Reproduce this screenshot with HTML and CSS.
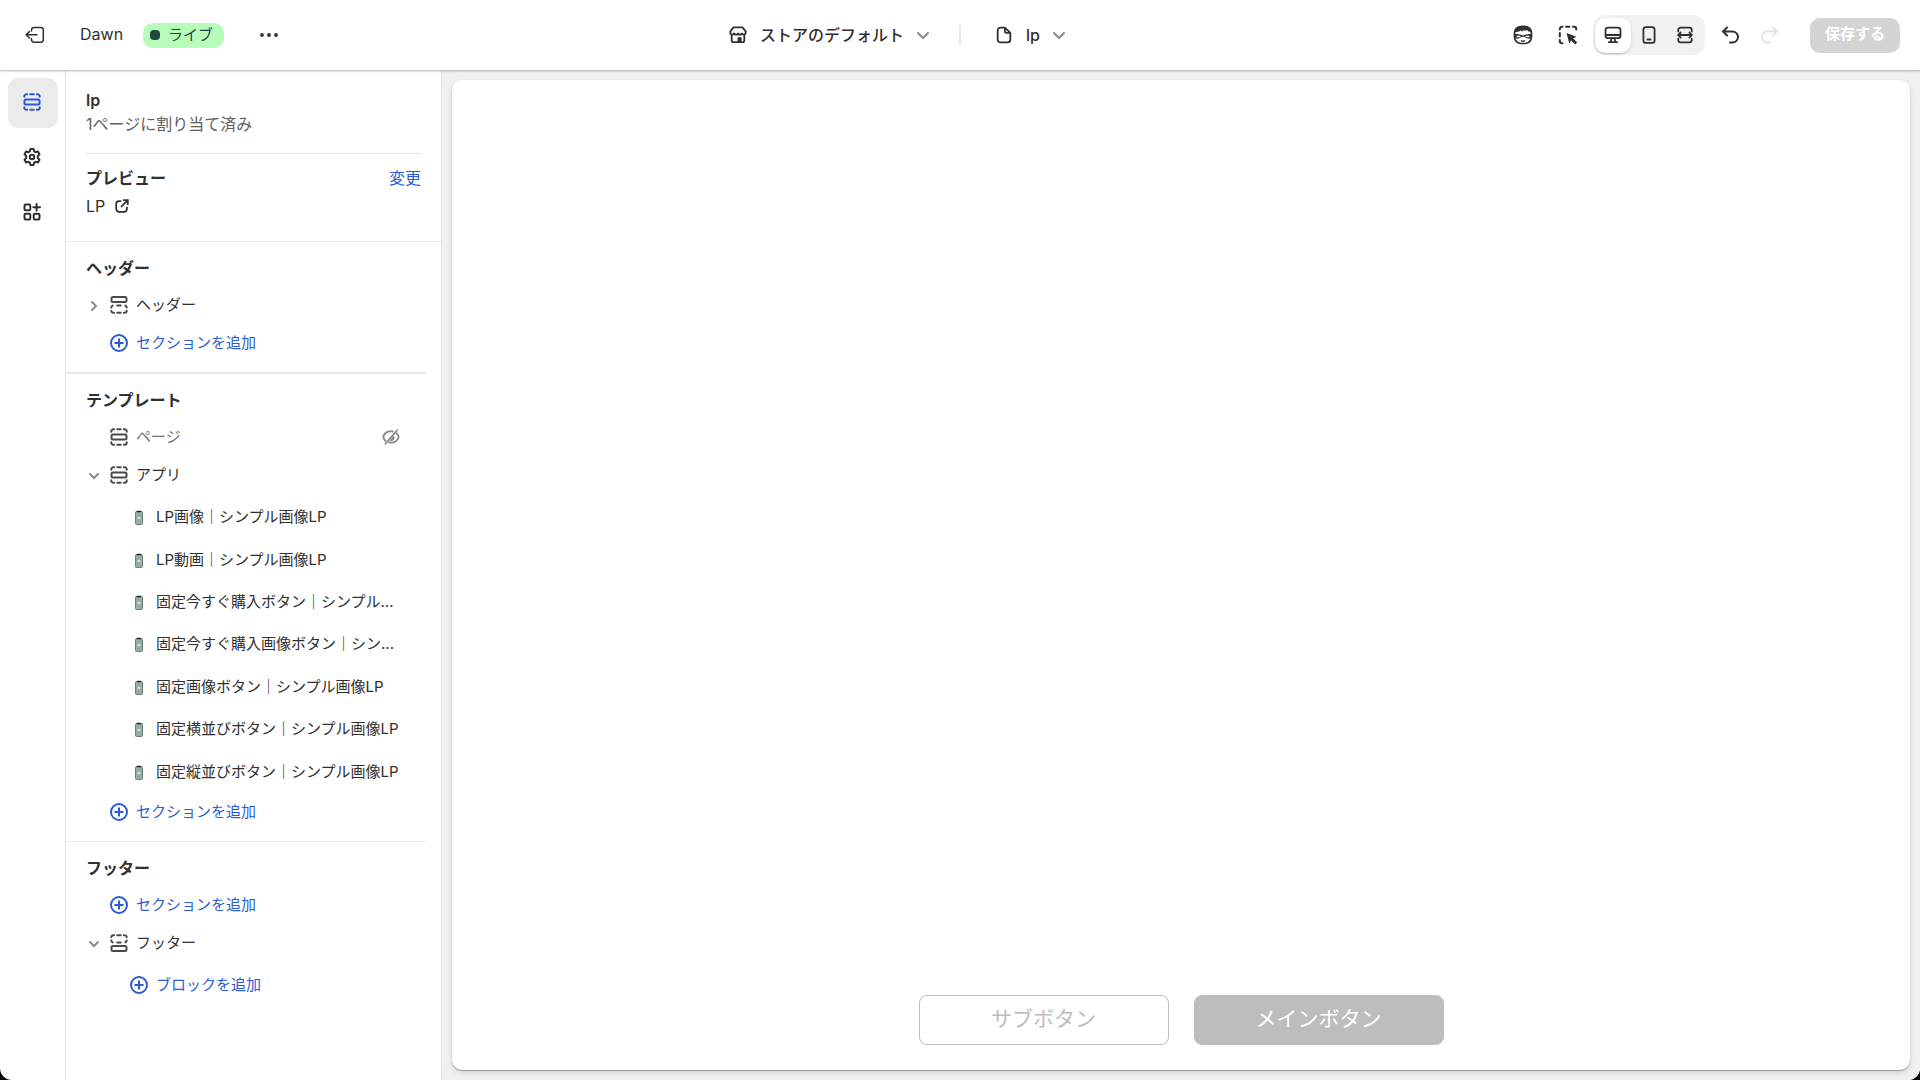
FILE: index.html
```html
<!DOCTYPE html>
<html lang="ja">
<head>
    <meta charset="UTF-8">
    <meta name="viewport" content="width=device-width, initial-scale=1.0">
    <title>Dawn - lp</title>
    <link rel="stylesheet" href="styles.css">
</head>
<body>
    <!-- shared icons -->
    <svg class="sprite" aria-hidden="true">
        <symbol id="i-section" viewBox="0 0 18 18">
            <rect x="1.5" y="6.5" width="15" height="5" rx="1.5"/>
            <path d="M1.3 3.8v-.5a2 2 0 0 1 2-2h.9M7.3 1.3h3.4M13.8 1.3h.9a2 2 0 0 1 2 2v.5M1.3 14.2v.5a2 2 0 0 0 2 2h.9M7.3 16.7h3.4M13.8 16.7h.9a2 2 0 0 0 2-2v-.5"/>
        </symbol>
        <symbol id="i-header" viewBox="0 0 18 18">
            <rect x="1.5" y="1" width="15" height="5" rx="1.5"/>
            <path d="M1.3 11.5c0-.9.5-1.6 1.4-1.9M7.3 9.6h3.4M15.3 9.6c.9.3 1.4 1 1.4 1.9M1.3 14.7a2 2 0 0 0 2 2h.9M7.3 16.7h3.4M13.8 16.7h.9a2 2 0 0 0 2-2"/>
        </symbol>
        <symbol id="i-footer" viewBox="0 0 18 18">
            <rect x="1.5" y="12" width="15" height="5" rx="1.5"/>
            <path d="M1.3 3.3a2 2 0 0 1 2-2h.9M7.3 1.3h3.4M13.8 1.3h.9a2 2 0 0 1 2 2M1.3 6.5c0 .9.5 1.6 1.4 1.9M7.3 8.4h3.4M15.3 8.400c.9-.3 1.400-1 1.400-1.900"/>
        </symbol>
        <symbol id="i-plus" viewBox="0 0 18 18">
            <circle cx="9" cy="9" r="8"/>
            <path d="M9 5.2v7.6M5.2 9h7.6"/>
        </symbol>
        <symbol id="i-down" viewBox="0 0 18 18">
            <path d="M4 7l5 5 5-5"/>
        </symbol>
        <symbol id="i-toggle-down" viewBox="0 0 18 18">
            <path d="M6 8l4 4 4-4"/>
        </symbol>
        <symbol id="i-toggle-right" viewBox="0 0 18 18">
            <path d="M8 6l4 4-4 4"/>
        </symbol>
        <symbol id="i-block" viewBox="0 0 18 18">
            <rect x="5.5" y="3.5" width="7" height="13" rx="1" fill="#8fb0a0" stroke="#777" stroke-width="1"/>
            <path d="M7.5 3.5h3" stroke="#222" stroke-width="1.5"/>
            <path d="M8 10h2" stroke="#e4f2ea" stroke-width="1.5"/>
        </symbol>
    </svg>

    <div class="app">
        <header class="topbar">
            <div class="topbar-half">
                <div class="theme">
                    <button class="icon-btn" aria-label="戻る">
                        <svg class="icon thin" viewBox="0 0 20 18"><path d="M6.5 5V4a2.6 2.6 0 0 1 2.6-2.6h6.6A2.6 2.6 0 0 1 18.3 4v9.6a2.6 2.6 0 0 1-2.6 2.6H9.1a2.6 2.6 0 0 1-2.6-2.6v-1M12 8.8H1.2M4.4 5.6L1.2 8.8l3.2 3.2"/></svg>
                    </button>
                    <span class="theme-name">Dawn</span>
                    <span class="badge">ライブ</span>
                    <button class="icon-btn" aria-label="その他">
                        <svg class="icon fill" viewBox="0 0 20 18"><circle cx="3" cy="9" r="1.9"/><circle cx="10" cy="9" r="1.9"/><circle cx="17" cy="9" r="1.9"/></svg>
                    </button>
                </div>
                <button class="picker picker-store">
                    <svg class="icon" viewBox="0 0 20 20"><path d="M5 1.5h10L18.5 6v1.500a2 2 0 0 1-4.200 0 2 2 0 0 1-4.300 0 2 2 0 0 1-4.300 0 2 2 0 0 1-4.200 0V6zM3 10v6a2 2 0 0 0 2 2h10a2 2 0 0 0 2-2v-6"/><path d="M10.5 18v-4.5H13V18z" fill="currentColor"/></svg>
                    ストアのデフォルト
                    <svg class="icon chev"><use href="#i-down"/></svg>
                </button>
            </div>
            <span class="topbar-line"></span>
            <div class="topbar-half">
                <button class="picker picker-page">
                    <svg class="icon" viewBox="0 0 20 20"><path d="M11 1.7H6a3 3 0 0 0-3 3v10.6a3 3 0 0 0 3 3h8a3 3 0 0 0 3-3V7.7zM11 1.7v4.5a1.500 1.500 0 0 0 1.500 1.500H17"/></svg>
                    lp
                    <svg class="icon chev"><use href="#i-down"/></svg>
                </button>
                <div class="tools">
                    <button class="icon-btn" aria-label="Sidekick">
                        <!-- masked face: head, hair, mask, eyes, smile -->
                        <svg class="icon" viewBox="0 0 20 20">
                            <rect x="1.5" y="1.5" width="17" height="17" rx="6.5" stroke-width="1.7"/>
                            <path class="solid" d="M1.5 7C2 3 5 .8 10 .8S18 3 18.500 7c-2.500 0-4-.8-4.500-2-1.500.9-3 .7-4 .2-.4.8-1.200 1.200-2 1.200V5.200C6 7 4 7 1.500 7z"/>
                            <path class="solid" d="M1 8.500l6 1c1.200.2 1.800.8 3 .8s1.800-.6 3-.8l6-1V12c-1.300 2-5 2.200-6.500.5-.8-.9-4.200-.9-5 0C6 14.200 2.300 14 1 12z"/>
                            <path d="M4.200 11.500h2.600M13.200 11.500h2.600" stroke="#fff" stroke-width="1.500"/>
                            <path d="M8.300 15.800c1 .6 2.400.6 3.400 0" stroke-width="1.300"/>
                        </svg>
                    </button>
                    <button class="icon-btn" aria-label="インスペクター">
                        <svg class="icon" viewBox="0 0 20 20"><path d="M1.8 4.5V4A2.200 2.200 0 0 1 4 1.8h.5M8 1.8h3.500M15 1.8h1A2.200 2.200 0 0 1 18.200 4v.5M1.8 8v3.500M1.8 15v1A2.200 2.200 0 0 0 4 18.200h.5"/><path class="solid" d="M8.500 8l10 3.700-3.500 1.600 4.200 4.200-2 2-4.200-4.200-1.600 3.500z"/></svg>
                    </button>
                    <div class="devices">
                        <button class="device active" aria-label="デスクトップ">
                            <svg class="icon" viewBox="0 0 20 20"><rect x="1.7" y="1.9" width="16.6" height="11.6" rx="2.8"/><path d="M2 10h16M8.300 13.500L7.500 18M11.700 13.500l.8 4.500M5.500 18h9"/></svg>
                        </button>
                        <button class="device" aria-label="モバイル">
                            <svg class="icon" viewBox="0 0 20 20"><rect x="3.8" y="1.2" width="12.4" height="17.6" rx="2.8"/><path d="M8.300 15h3.400"/></svg>
                        </button>
                        <button class="device" aria-label="全画面">
                            <svg class="icon" viewBox="0 0 20 20"><path d="M2.500 6V4.500a2.700 2.700 0 0 1 2.700-2.700h9.600a2.700 2.700 0 0 1 2.700 2.700V6M2.500 14v1.500a2.700 2.700 0 0 0 2.700 2.700h9.600a2.700 2.700 0 0 0 2.700-2.700V14M2.500 10h15M5.200 7.200L2.400 10l2.800 2.800M14.800 7.200l2.800 2.800-2.800 2.800"/></svg>
                        </button>
                    </div>
                    <button class="icon-btn" aria-label="元に戻す">
                        <svg class="icon" viewBox="0 0 20 20"><path d="M7 2.500l-4 4 4 4M3 6.500h9.500a5 5 0 0 1 0 11H10"/></svg>
                    </button>
                    <button class="icon-btn" aria-label="やり直す" disabled>
                        <svg class="icon" viewBox="0 0 20 20"><path d="M13 2.500l4 4-4 4M17 6.500H7.500a5 5 0 0 0 0 11H10"/></svg>
                    </button>
                    <button class="save" disabled>保存する</button>
                </div>
            </div>
        </header>

        <div class="main">
            <nav class="rail">
                <button class="rail-btn active" aria-label="セクション"><svg class="icon"><use href="#i-section"/></svg></button>
                <button class="rail-btn" aria-label="テーマ設定">
                    <svg class="icon" viewBox="0 0 18 18"><path d="M7.400 1h3.200l.5 2.300 1.500.9 2.300-.7 1.600 2.800-1.700 1.600v2.200l1.700 1.600-1.600 2.800-2.300-.7-1.500.9-.5 2.300H7.400l-.5-2.300-1.500-.9-2.300.7-1.600-2.800 1.700-1.600V7.900L1.500 6.300l1.600-2.800 2.300.7 1.500-.9z" stroke-linejoin="round"/><circle cx="9" cy="9" r="2.200"/></svg>
                </button>
                <button class="rail-btn" aria-label="アプリ埋め込み">
                    <svg class="icon" viewBox="0 0 18 18"><rect x="1.5" y="1.5" width="5.8" height="5.8" rx="1.2"/><rect x="1.5" y="10.7" width="5.8" height="5.8" rx="1.2"/><rect x="10.7" y="10.7" width="5.8" height="5.8" rx="1.2"/><path d="M13.600 1v6.500M10.300 4.300h6.700"/></svg>
                </button>
            </nav>

            <aside class="panel">
                <div class="panel-head">
                    <h1>lp</h1>
                    <p class="assigned">1ページに割り当て済み</p>
                    <div class="preview-info">
                        <div class="preview-row">
                            <h2>プレビュー</h2>
                            <a href="#">変更</a>
                        </div>
                        <a class="preview-link" href="#">LP
                            <svg class="icon" viewBox="0 0 18 18"><path d="M7.500 3.500h-2a3 3 0 0 0-3 3v6a3 3 0 0 0 3 3h6a3 3 0 0 0 3-3v-2M11 2.500h4.500V7M15.500 2.500l-7 7"/></svg>
                        </a>
                    </div>
                </div>

                <section class="group group-header">
                    <h2>ヘッダー</h2>
                    <div class="row">
                        <button class="toggle" aria-label="開く"><svg class="icon"><use href="#i-toggle-right"/></svg></button>
                        <svg class="icon"><use href="#i-header"/></svg>
                        <span class="label">ヘッダー</span>
                    </div>
                    <button class="row add"><svg class="icon"><use href="#i-plus"/></svg>セクションを追加</button>
                </section>

                <section class="group">
                    <h2>テンプレート</h2>
                    <div class="row indent muted">
                        <svg class="icon"><use href="#i-section"/></svg>
                        <span class="label">ページ</span>
                        <button class="hide-btn" aria-label="表示する">
                            <svg class="icon" viewBox="0 0 20 18"><path d="M12 2.800A9 9 0 0 0 10 2.600C5.500 2.600 2.500 5 1.300 9c.5 1.800 1.400 3.200 2.500 4.200M16.200 5c1.100 1 1.900 2.200 2.300 4-1.300 4-4 6.300-8.500 6.300-.8 0-1.500-.1-2.200-.3M16.800 1.500l-13 15"/><path class="solid" d="M8.500 12.800L13 7.500a3.500 3.500 0 0 1-4.500 5.300z"/></svg>
                        </button>
                    </div>
                    <div class="row">
                        <button class="toggle" aria-label="閉じる"><svg class="icon"><use href="#i-toggle-down"/></svg></button>
                        <svg class="icon"><use href="#i-section"/></svg>
                        <span class="label">アプリ</span>
                    </div>
                    <ul class="blocks">
                        <li><svg class="icon"><use href="#i-block"/></svg><span class="label">LP画像｜シンプル画像LP</span></li>
                        <li><svg class="icon"><use href="#i-block"/></svg><span class="label">LP動画｜シンプル画像LP</span></li>
                        <li><svg class="icon"><use href="#i-block"/></svg><span class="label">固定今すぐ購入ボタン｜シンプル...</span></li>
                        <li><svg class="icon"><use href="#i-block"/></svg><span class="label">固定今すぐ購入画像ボタン｜シン...</span></li>
                        <li><svg class="icon"><use href="#i-block"/></svg><span class="label">固定画像ボタン｜シンプル画像LP</span></li>
                        <li><svg class="icon"><use href="#i-block"/></svg><span class="label">固定横並びボタン｜シンプル画像LP</span></li>
                        <li><svg class="icon"><use href="#i-block"/></svg><span class="label">固定縦並びボタン｜シンプル画像LP</span></li>
                    </ul>
                    <button class="row add"><svg class="icon"><use href="#i-plus"/></svg>セクションを追加</button>
                </section>

                <section class="group">
                    <h2>フッター</h2>
                    <button class="row add"><svg class="icon"><use href="#i-plus"/></svg>セクションを追加</button>
                    <div class="row">
                        <button class="toggle" aria-label="閉じる"><svg class="icon"><use href="#i-toggle-down"/></svg></button>
                        <svg class="icon"><use href="#i-footer"/></svg>
                        <span class="label">フッター</span>
                    </div>
                    <button class="row add add-block"><svg class="icon"><use href="#i-plus"/></svg>ブロックを追加</button>
                </section>
            </aside>

            <main class="canvas">
                <div class="page">
                    <button class="cta cta-sub">サブボタン</button>
                    <button class="cta cta-main">メインボタン</button>
                </div>
            </main>
        </div>
    </div>
</body>
</html>
```

FILE: styles.css
```css
* {
    box-sizing: border-box;
}
body {
    margin: 0;
    background: #000;
    color: #303030;
    font-family: Inter, "Noto Sans CJK JP", sans-serif;
    font-size: 15px;
    line-height: 24px;
}
h1, h2, p, ul {
    margin: 0;
    padding: 0;
}
h1, h2 {
    font-size: 16px;
    font-weight: 600;
}
button {
    border: none;
    background: none;
    padding: 0;
    color: inherit;
    font: inherit;
    cursor: pointer;
}
a {
    color: #2a5bd7;
    text-decoration: none;
}
.sprite {
    display: none;
}
.icon {
    width: 18px;
    height: 18px;
    flex: none;
    display: block;
    fill: none;
    stroke: currentColor;
    stroke-width: 2;
    stroke-linecap: round;
}
.icon.thin {
    stroke-width: 1.5;
}
.icon.fill {
    fill: currentColor;
    stroke: none;
}
.solid {
    fill: currentColor;
    stroke: none;
}
.app {
    min-height: 100vh;
    display: flex;
    flex-direction: column;
    background: #fff;
    border-radius: 0 0 12px 12px;
    overflow: hidden;
}

/* top bar */
.topbar {
    display: grid;
    grid-template-columns: 1fr 2px 1fr;
    align-items: center;
    height: 70px;
    box-shadow: 0 1px 2px rgba(0, 0, 0, 0.3);
    position: relative;
    z-index: 1;
}
.topbar-half, .theme, .tools, .devices, .picker {
    display: flex;
    align-items: center;
}
.topbar-half {
    justify-content: space-between;
}
.theme {
    padding-left: 25px;
}
.icon-btn .icon {
    width: 20px;
    height: 20px;
}
.theme-name {
    margin: 0 20px 0 35px;
    padding-bottom: 2px;
    font-size: 16px;
}
.badge {
    display: flex;
    align-items: center;
    gap: 8px;
    height: 25px;
    margin-right: 35px;
    padding: 0 11px 0 7px;
    border-radius: 10px;
    background: #b8fcb9;
    color: #1c4a40;
}
.badge::before {
    content: "";
    width: 10px;
    height: 10px;
    border-radius: 4px;
    background: #1c4a40;
}
.picker {
    gap: 10px;
    font-size: 16px;
    font-weight: 500;
}
.picker .icon:first-child {
    margin-right: 3px;
}
.picker .chev {
    color: #8a8a8a;
}
.picker-store {
    margin-right: 27px;
}
.picker-page {
    margin-left: 34px;
}
.topbar-line {
    height: 20px;
    background: #e8e8e8;
}
.tools {
    padding-right: 20px;
}
.tools .icon-btn {
    margin-right: 20px;
}
.tools .icon-btn:nth-child(1) {
    margin-right: 25px;
}
.tools .icon-btn:nth-child(2) {
    margin-right: 15px;
}
.tools .icon-btn:disabled {
    color: #e3e3e3;
    margin-right: 30px;
}
.devices {
    height: 40px;
    margin-right: 15px;
    padding: 0 2px;
    border-radius: 12px;
    background: #f1f1f1;
}
.device {
    display: grid;
    place-items: center;
    width: 36px;
    height: 35px;
    border-radius: 10px;
}
.device.active {
    background: #fff;
    box-shadow: 0 1px 2px rgba(0, 0, 0, 0.25);
}
.save {
    width: 90px;
    height: 35px;
    padding-bottom: 2px;
    border-radius: 10px;
    background: #d4d4d4;
    color: #fff;
    font-weight: 600;
}

.main {
    flex: 1;
    display: flex;
}

/* left rail */
.rail {
    display: flex;
    flex-direction: column;
    gap: 5px;
    width: 66px;
    padding: 8px 7px 8px 8px;
    border-right: 1px solid #e3e3e3;
}
.rail-btn {
    display: grid;
    place-items: center;
    width: 50px;
    height: 50px;
    padding: 0 2px 2px 0;
    border-radius: 10px;
}
.rail-btn.active {
    background: #ebebeb;
    color: #2a5bd7;
}

/* section panel */
.panel {
    width: 376px;
    border-right: 1px solid #e3e3e3;
}
.panel-head {
    padding: 18px 20px 23px;
    border-bottom: 1px solid #e8e8e8;
}
.assigned {
    color: #616161;
    font-size: 16px;
}
.preview-info {
    margin-top: 17px;
    padding-top: 12px;
    border-top: 1px solid #e3e3e3;
}
.preview-row {
    display: flex;
    justify-content: space-between;
    font-size: 16px;
}
.preview-link {
    display: flex;
    align-items: center;
    gap: 9px;
    margin-top: 4px;
    color: #303030;
    font-size: 16px;
}
.preview-link .icon {
    width: 16px;
    height: 16px;
}
.group {
    margin-right: 15px;
    padding: 14px 0 10px;
    border-bottom: 1px solid #e8e8e8;
}
.group-header {
    border-bottom-width: 2px;
}
.group:last-child {
    border-bottom: none;
}
.group h2 {
    margin: 0 0 6px 20px;
}
.row {
    display: flex;
    align-items: center;
    gap: 8px;
    width: 100%;
    height: 38px;
    padding: 0 24px 0 18px;
}
.row .icon {
    color: #4a4a4a;
}
.row.indent, .row.add {
    padding-left: 44px;
}
.row.add, .row.add .icon {
    color: #2a5bd7;
}
.row.add-block {
    height: 46px;
    padding-left: 64px;
}
.toggle {
    width: 18px;
}
.row .toggle .icon, .row .hide-btn .icon {
    color: #8a8a8a;
}
.label {
    min-width: 0;
    overflow: hidden;
    white-space: nowrap;
    text-overflow: ellipsis;
}
.muted .label {
    color: #757575;
}
.hide-btn {
    margin: 0 2px 0 auto;
}
.blocks {
    display: flex;
    flex-direction: column;
    height: 297px;
    margin-top: 2px;
    list-style: none;
}
.blocks li {
    flex: 1;
    display: flex;
    align-items: center;
    gap: 8px;
    padding: 0 24px 0 64px;
}

/* preview canvas */
.canvas {
    flex: 1;
    display: flex;
    padding: 10px;
    background: #f1f1f1;
}
.page {
    flex: 1;
    display: flex;
    justify-content: center;
    align-items: flex-end;
    gap: 25px;
    padding: 25px;
    border-radius: 10px;
    background: #fff;
    box-shadow: 0 1px 1px rgba(0, 0, 0, 0.3), 0 3px 6px rgba(0, 0, 0, 0.12);
}
.cta {
    width: 250px;
    height: 50px;
    padding-bottom: 2px;
    border: 1px solid #bdbdbd;
    border-radius: 8px;
    font-size: 21px;
}
.cta-sub {
    color: #bdbdbd;
}
.cta-main {
    background: #bdbdbd;
    color: #fff;
}
```
